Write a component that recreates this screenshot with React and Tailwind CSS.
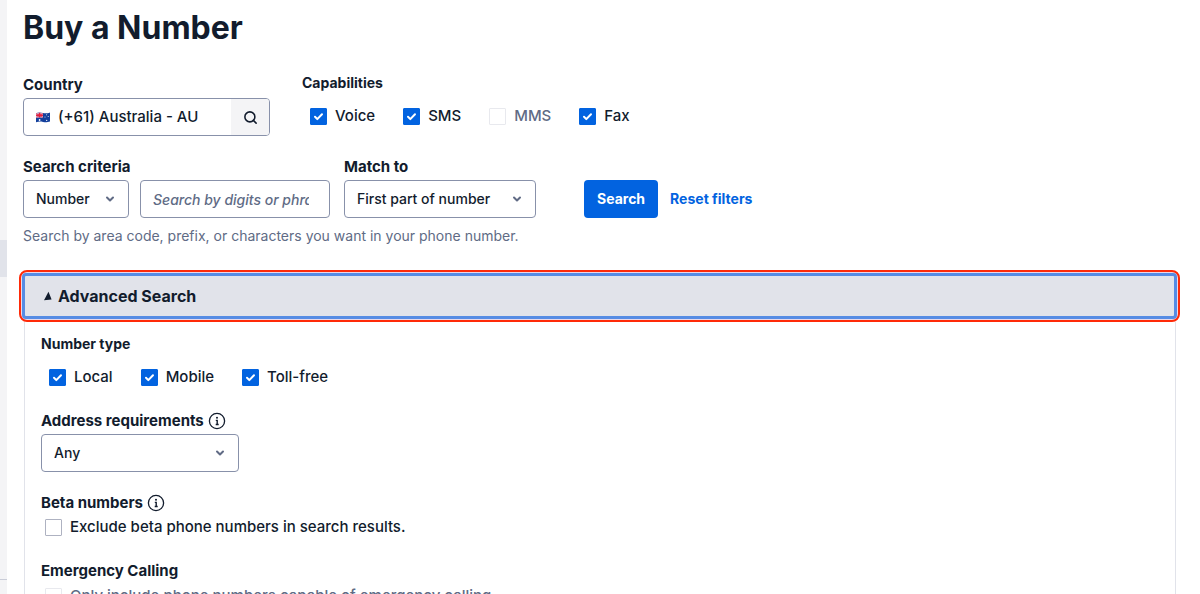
import { ChevronDown, Search } from "lucide-react";

const CAPABILITIES = [
  { id: "voice", label: "Voice", checked: true },
  { id: "sms", label: "SMS", checked: true },
  { id: "mms", label: "MMS", disabled: true },
  { id: "fax", label: "Fax", checked: true },
];

const NUMBER_TYPES = [
  { id: "local", label: "Local", checked: true },
  { id: "mobile", label: "Mobile", checked: true },
  { id: "toll-free", label: "Toll-free", checked: true },
];

function Checkbox({ id, label, checked, disabled }) {
  return (
    <label
      htmlFor={id}
      className="flex items-center gap-2 text-[15px] leading-5 font-medium has-disabled:text-[#606b85]"
    >
      <span className="grid place-items-center">
        <input
          id={id}
          type="checkbox"
          defaultChecked={checked}
          disabled={disabled}
          className="peer col-start-1 row-start-1 size-[17px] appearance-none rounded-[1px] border border-[#aeb2c1] bg-white checked:border-[#0263e0] checked:bg-[#0263e0] disabled:border-[#e8e9ee]"
        />
        <svg
          viewBox="0 0 17 17"
          className="pointer-events-none invisible col-start-1 row-start-1 size-[17px] peer-checked:visible"
          fill="none"
          stroke="white"
          strokeWidth="2"
          strokeLinecap="round"
          strokeLinejoin="round"
        >
          <path d="M5 8.8l2.3 2.3L12 6.2" />
        </svg>
      </span>
      {label}
    </label>
  );
}

function CheckboxGroup({ title, items }) {
  return (
    <fieldset>
      <legend className="text-sm leading-[22px] font-bold">{title}</legend>
      <div className="mt-3 flex gap-7 pl-2">
        {items.map((item) => (
          <Checkbox key={item.id} {...item} />
        ))}
      </div>
    </fieldset>
  );
}

function SelectBox({ id, options, className }) {
  return (
    <div className={`grid items-center ${className}`}>
      <select
        id={id}
        className="col-start-1 row-start-1 h-[38px] w-full appearance-none rounded border border-[#8891aa] bg-white px-3 text-sm font-medium"
      >
        {options.map((option) => (
          <option key={option}>{option}</option>
        ))}
      </select>
      <ChevronDown
        className="pointer-events-none col-start-1 row-start-1 mr-[13px] size-3 justify-self-end text-[#606b85]"
        strokeWidth={4}
      />
    </div>
  );
}

function InfoButton({ label }) {
  return (
    <button type="button" aria-label={label}>
      <svg viewBox="0 0 18 18" className="size-[18px]" fill="none" stroke="currentColor">
        <circle cx="9" cy="9" r="7.6" strokeWidth="1.3" />
        <circle cx="9" cy="5.8" r="1" fill="currentColor" stroke="none" />
        <path d="M7.8 8.4H9.2V12.4M7.7 12.5h3" strokeWidth="1.4" />
      </svg>
    </button>
  );
}

function AustraliaFlag() {
  return (
    <svg viewBox="0 0 14 11" className="h-[11px] w-[14px]">
      <path d="M0 1.2C3 0 5 .8 7 1.1s4 .5 7-.6v9C11 10.6 9 10.2 7 9.9S3 9.2 0 10.3z" fill="#123f9c" />
      <path d="M0 1.2C3 0 5 .8 7 1.1V5.8C5 5.5 3 5 0 6z" fill="#c9c5e0" />
      <path d="M0 3.5c3-1 5-.4 7-.1M3.6.7v4.7" stroke="#e5203c" strokeWidth="1.7" fill="none" />
      <path d="M.4 1.5L6.7 5.4M6.7 1.4L.4 5.6" stroke="#e5203c" strokeWidth=".8" />
      <g fill="white">
        <circle cx="3.6" cy="8" r=".9" />
        <circle cx="10.6" cy="2.7" r=".5" />
        <circle cx="9" cy="5" r=".5" />
        <circle cx="12.2" cy="4.5" r=".5" />
        <circle cx="10.7" cy="8.4" r=".6" />
      </g>
    </svg>
  );
}

function Filters() {
  return (
    <form onSubmit={(e) => e.preventDefault()}>
      <div className="flex gap-8">
        <div className="pt-0.5">
          <label htmlFor="country" className="mb-0.5 block text-[15px] leading-[22px] font-bold">
            Country
          </label>
          <div className="flex h-[38px] w-[247px] items-center overflow-hidden rounded border border-[#8891aa] pl-3">
            <AustraliaFlag />
            <input
              id="country"
              defaultValue="(+61) Australia - AU"
              className="ml-2 min-w-0 flex-1 text-[15px] font-medium outline-none"
            />
            <button
              type="button"
              aria-label="Find country"
              className="grid h-full w-[38px] place-items-center bg-[#f4f4f6]"
            >
              <Search className="size-[15px]" strokeWidth={2.5} />
            </button>
          </div>
        </div>
        <CheckboxGroup title="Capabilities" items={CAPABILITIES} />
      </div>

      <div className="mt-5 flex items-end">
        <div>
          <label htmlFor="criteria" className="mb-0.5 block text-[15px] leading-[22px] font-bold">
            Search criteria
          </label>
          <div className="flex gap-[11px]">
            <SelectBox id="criteria" className="w-[106px]" options={["Number", "Location"]} />
            <input
              aria-label="Search by digits or phrases"
              placeholder="Search by digits or phrases"
              className="h-[38px] w-[190px] rounded border border-[#8891aa] pr-5 pl-3 text-sm font-medium placeholder:text-[#606b85] placeholder:italic"
            />
          </div>
        </div>
        <div className="ml-[14px]">
          <label htmlFor="match" className="mb-0.5 block text-[15px] leading-[22px] font-bold">
            Match to
          </label>
          <SelectBox
            id="match"
            className="w-[192px]"
            options={["First part of number", "Anywhere in number", "Last part of number"]}
          />
        </div>
        <button
          type="submit"
          className="ml-12 h-[38px] rounded bg-[#0263e0] px-[13px] text-sm font-bold text-white"
        >
          Search
        </button>
        <button type="reset" className="ml-3 h-[38px] text-sm font-bold text-[#0263e0]">
          Reset filters
        </button>
      </div>
      <p className="mt-2 text-sm leading-5 text-[#606b85]">
        Search by area code, prefix, or characters you want in your phone number.
      </p>
    </form>
  );
}

function AdvancedSearch() {
  return (
    <section className="mt-6">
      <div className="-mx-1 rounded-lg border-2 border-[#ff2a08] bg-[#e8d9ea] p-px">
        <button
          type="button"
          aria-expanded="true"
          aria-controls="advanced"
          className="flex h-[46px] w-full items-center gap-1.5 rounded-[4px] border-3 border-[#568ce4] bg-[#e1e3ea] pl-[18px] text-base font-bold"
        >
          <svg viewBox="0 0 9 10" className="h-[10px] w-[9px]" fill="currentColor">
            <path d="M5.5.8L8.6 8.6L1 9.3z" />
          </svg>
          Advanced Search
        </button>
      </div>
      <div id="advanced" className="ml-px border-x border-[#e1e3ea] px-4 pt-[11px]">
        <CheckboxGroup title="Number type" items={NUMBER_TYPES} />

        <div className="mt-[23px] flex items-center gap-1">
          <label htmlFor="address" className="text-[15px] leading-[22px] font-bold">
            Address requirements
          </label>
          <InfoButton label="About address requirements" />
        </div>
        <SelectBox id="address" className="mt-0.5 w-[198px]" options={["Any", "None", "Local"]} />

        <div className="mt-5 flex items-center gap-1">
          <h2 className="text-[15px] leading-[22px] font-bold">Beta numbers</h2>
          <InfoButton label="About beta numbers" />
        </div>
        <div className="mt-[3px] pl-1">
          <Checkbox id="beta" label="Exclude beta phone numbers in search results." />
        </div>

        <h2 className="mt-[23px] text-[15px] leading-[22px] font-bold">Emergency Calling</h2>
        <div className="mt-1 pl-1">
          <Checkbox
            id="emergency"
            label="Only include phone numbers capable of emergency calling."
            disabled
          />
        </div>
      </div>
    </section>
  );
}

export default function App() {
  return (
    <div className="flex h-screen overflow-hidden bg-white font-['Inter',sans-serif] text-[#121c2d]">
      <aside className="flex w-[7px] shrink-0 flex-col bg-[#f4f4f6] pt-60">
        <div className="h-[37px] bg-[#e1e3ea]" />
        <div className="mt-[302px] h-px bg-[#cacdd8]" />
      </aside>
      <main className="min-w-0 flex-1 pt-2 pr-6 pl-4">
        <h1 className="mb-6 text-[32px] leading-10 font-bold">Buy a Number</h1>
        <Filters />
        <AdvancedSearch />
      </main>
    </div>
  );
}
